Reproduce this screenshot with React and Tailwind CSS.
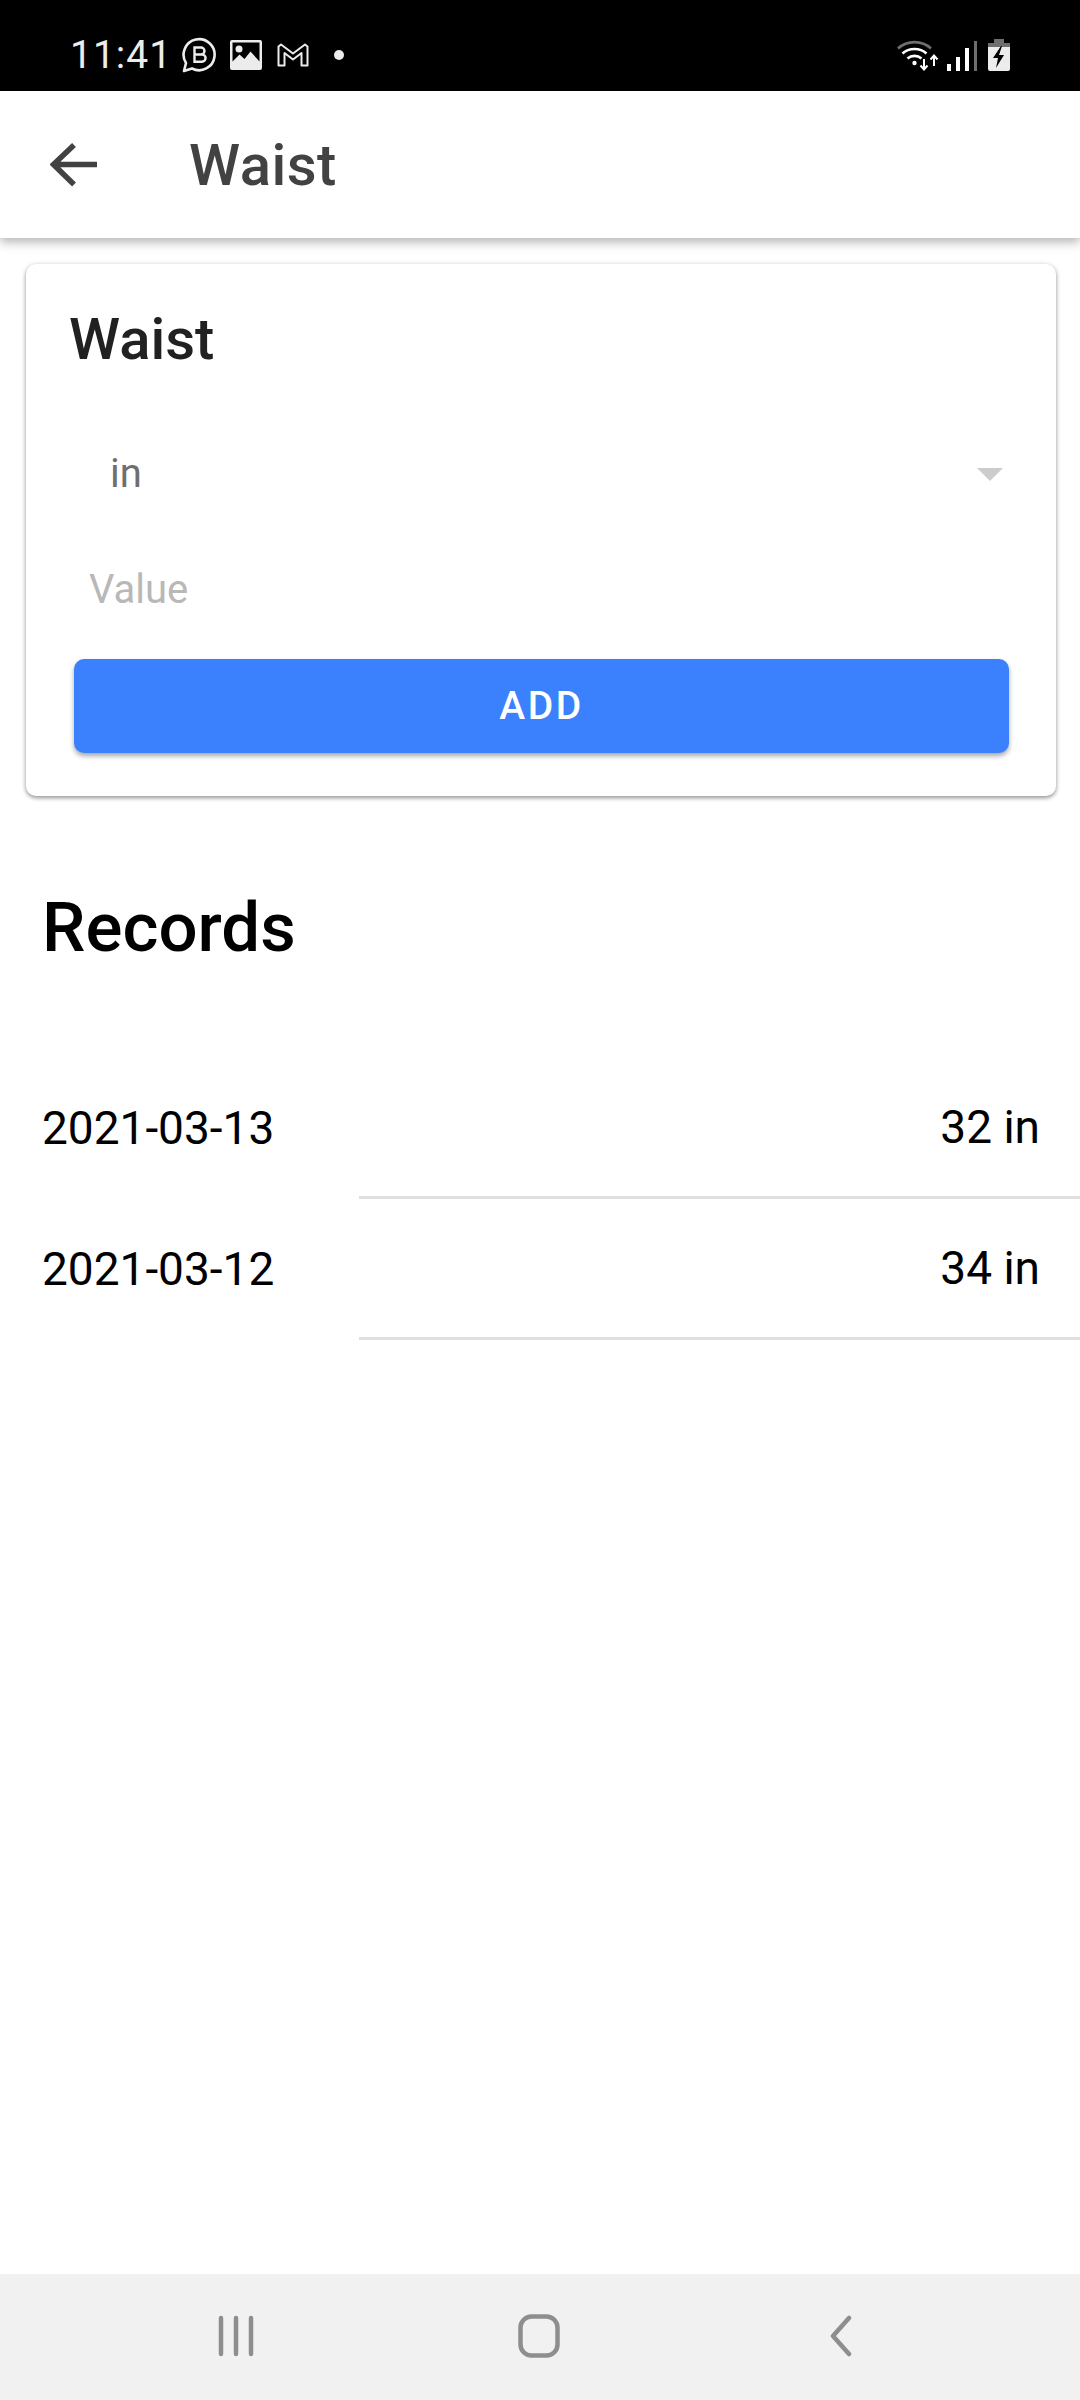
import React from "react";

const font = { fontFamily: "Roboto, sans-serif" };

function StatusLeft() {
  return (
    <div className="flex items-center ml-[70px] mt-[18px] text-[#ececec]">
      <span className="text-[39px] leading-[46px] tracking-[1px] w-[111px]">11:41</span>
      <svg width="36" height="36" viewBox="0 0 36 36" fill="none">
        <path d="M3 34 L5 26 A15.500 15.500 0 1 1 11 31.500 Z" stroke="#ececec" strokeWidth="2.600" strokeLinejoin="round" />
        <path d="M13.500 10.500h6.500a3.400 3.400 0 0 1 0 7h-6.500zM13.500 17.500h7.500a3.600 3.600 0 0 1 0 7.200h-7.500z" stroke="#ececec" strokeWidth="2.400" />
      </svg>
      <svg className="ml-[13px]" width="32" height="30" viewBox="0 0 32 30">
        <path fillRule="evenodd" d="M2 0h28a2 2 0 0 1 2 2v26a2 2 0 0 1-2 2H2a2 2 0 0 1-2-2V2a2 2 0 0 1 2-2zM2.500 2.500v19l7-7 5 4.500 6-7.500 9 10V2.500z" fill="#ececec" />
        <circle cx="9" cy="9" r="3.500" fill="#ececec" />
      </svg>
      <svg className="ml-[15px]" width="32" height="24" viewBox="0 0 32 24" fill="none">
        <path d="M1.500 22.500V3.500L4 1.500 16 10.500 28 1.500 30.500 3.500V22.500H24.500V10L16 16.500 7.500 10V22.500Z" stroke="#ececec" strokeWidth="2" strokeLinejoin="round" />
      </svg>
      <span className="ml-[25px] w-[10px] h-[10px] rounded-full bg-[#ececec]" />
    </div>
  );
}

function StatusRight() {
  return (
    <div className="flex items-end mr-[70px] mt-[18px]">
      <svg width="44" height="32" viewBox="0 0 44 32" fill="none">
        <path d="M2 9.500 C11 1 26 1 35 9.500" stroke="#6e6e6e" strokeWidth="2.600" />
        <path d="M6.500 14.500 C13 8.500 24 8.500 30.500 14.500" stroke="#fff" strokeWidth="2.600" />
        <path d="M11.500 19.500 C15.500 16 21.500 16 25.500 19.500" stroke="#fff" strokeWidth="2.600" />
        <circle cx="18.500" cy="24" r="2.200" fill="#fff" />
        <path d="M28 20V30M24.500 26.500L28 30.500 31.500 26.500" stroke="#fff" strokeWidth="2" />
        <path d="M38 27V17M34.500 20.500L38 16.500 41.500 20.500" stroke="#fff" strokeWidth="2" />
      </svg>
      <div className="flex items-end gap-[5px] ml-[7px]">
        <span className="w-[4px] h-[7px] bg-white" />
        <span className="w-[4px] h-[14px] bg-white" />
        <span className="w-[4px] h-[23px] bg-white" />
        <span className="w-[3px] h-[30px] bg-[#6e6e6e]" />
      </div>
      <svg className="ml-[11px]" width="22" height="32" viewBox="0 0 22 32">
        <path d="M6 0h10v4h6v6H0V4h6z" fill="#6e6e6e" />
        <path d="M0 8h22v22a2 2 0 0 1-2 2H2a2 2 0 0 1-2-2z" fill="#ececec" />
        <path d="M13 7L5 19h5l-2 10 8-13h-5l3-9z" fill="#000" />
      </svg>
    </div>
  );
}

function Row({ date, value }) {
  return (
    <div className="relative h-[141px] flex justify-between pl-[42px] pr-[40px] pt-[43px] text-[46px] leading-[54px] text-black">
      <span>{date}</span>
      <span className="-mt-[1px]">{value}</span>
      <div className="absolute left-[359px] right-0 bottom-0 h-[3px] bg-[#e0e0e0]" />
    </div>
  );
}

export default function App() {
  return (
    <div style={font} className="w-[1080px] h-[2400px] bg-white flex flex-col overflow-hidden">
      <div className="h-[91px] bg-black flex items-center justify-between shrink-0">
        <StatusLeft />
        <StatusRight />
      </div>

      <div className="relative h-[147px] shrink-0 bg-white flex items-center shadow-[0_4px_10px_rgba(0,0,0,0.3)]">
        <svg className="ml-[50px]" width="48" height="44" viewBox="0 0 48 44" fill="none">
          <path d="M47 21.500H4M24 2L3.500 21.500 24 41.500" stroke="#424242" strokeWidth="5.500" />
        </svg>
        <span className="ml-[91px] text-[58px] leading-[60px] font-medium text-[#424242] tracking-[0.5px]">Waist</span>
      </div>

      <div className="ml-[26px] w-[1030px] mt-[26px] h-[532px] rounded-[10px] bg-white shadow-[0_2px_4px_rgba(0,0,0,0.4),0_0_6px_rgba(0,0,0,0.07)] shrink-0 flex flex-col">
        <div className="pl-[43px] pt-[43px] text-[58px] leading-[64px] font-medium text-[#212121]">Waist</div>
        <div className="flex items-center justify-between pl-[84px] pr-[53px] mt-[71px] h-[64px]">
          <span className="text-[40px] leading-[48px] text-[#6f6f6f]">in</span>
          <span className="w-0 h-0 border-x-[13px] border-x-transparent border-t-[13px] border-t-[#cccccc]" />
        </div>
        <div className="pl-[63px] mt-[62px] h-[72px] text-[40px] leading-[44px] text-[#b8b8b8]">Value</div>
        <div className="ml-[48px] w-[935px] h-[94px] mt-[19px] rounded-[10px] bg-[#3b80fd] shadow-[0_3px_5px_rgba(0,0,0,0.35)] flex items-center justify-center text-white text-[39px] font-medium tracking-[2.500px]">
          ADD
        </div>
      </div>

      <div className="pl-[42px] mt-[93px] text-[69px] leading-[78px] font-medium text-black">Records</div>

      <div className="mt-[91px]">
        <Row date="2021-03-13" value="32 in" />
        <Row date="2021-03-12" value="34 in" />
      </div>

      <div className="flex-1" />

      <div className="h-[126px] shrink-0 bg-[#f1f1f1] flex items-center pb-[2px]">
        <svg className="ml-[218px]" width="40" height="42" viewBox="0 0 40 42" fill="none" stroke="#8e8e8e" strokeWidth="4.500" strokeLinecap="round">
          <path d="M3 3V39M18 3V39M33 3V39" />
        </svg>
        <svg className="ml-[260px]" width="42" height="44" viewBox="0 0 42 44" fill="none">
          <rect x="2.500" y="2.500" width="37" height="39" rx="11" stroke="#8e8e8e" strokeWidth="4.500" />
        </svg>
        <svg className="ml-[267px]" width="26" height="42" viewBox="0 0 26 42" fill="none" stroke="#8e8e8e" strokeWidth="4.500" strokeLinecap="round" strokeLinejoin="round">
          <path d="M22 3L6 21 22 39" />
        </svg>
      </div>
    </div>
  );
}
